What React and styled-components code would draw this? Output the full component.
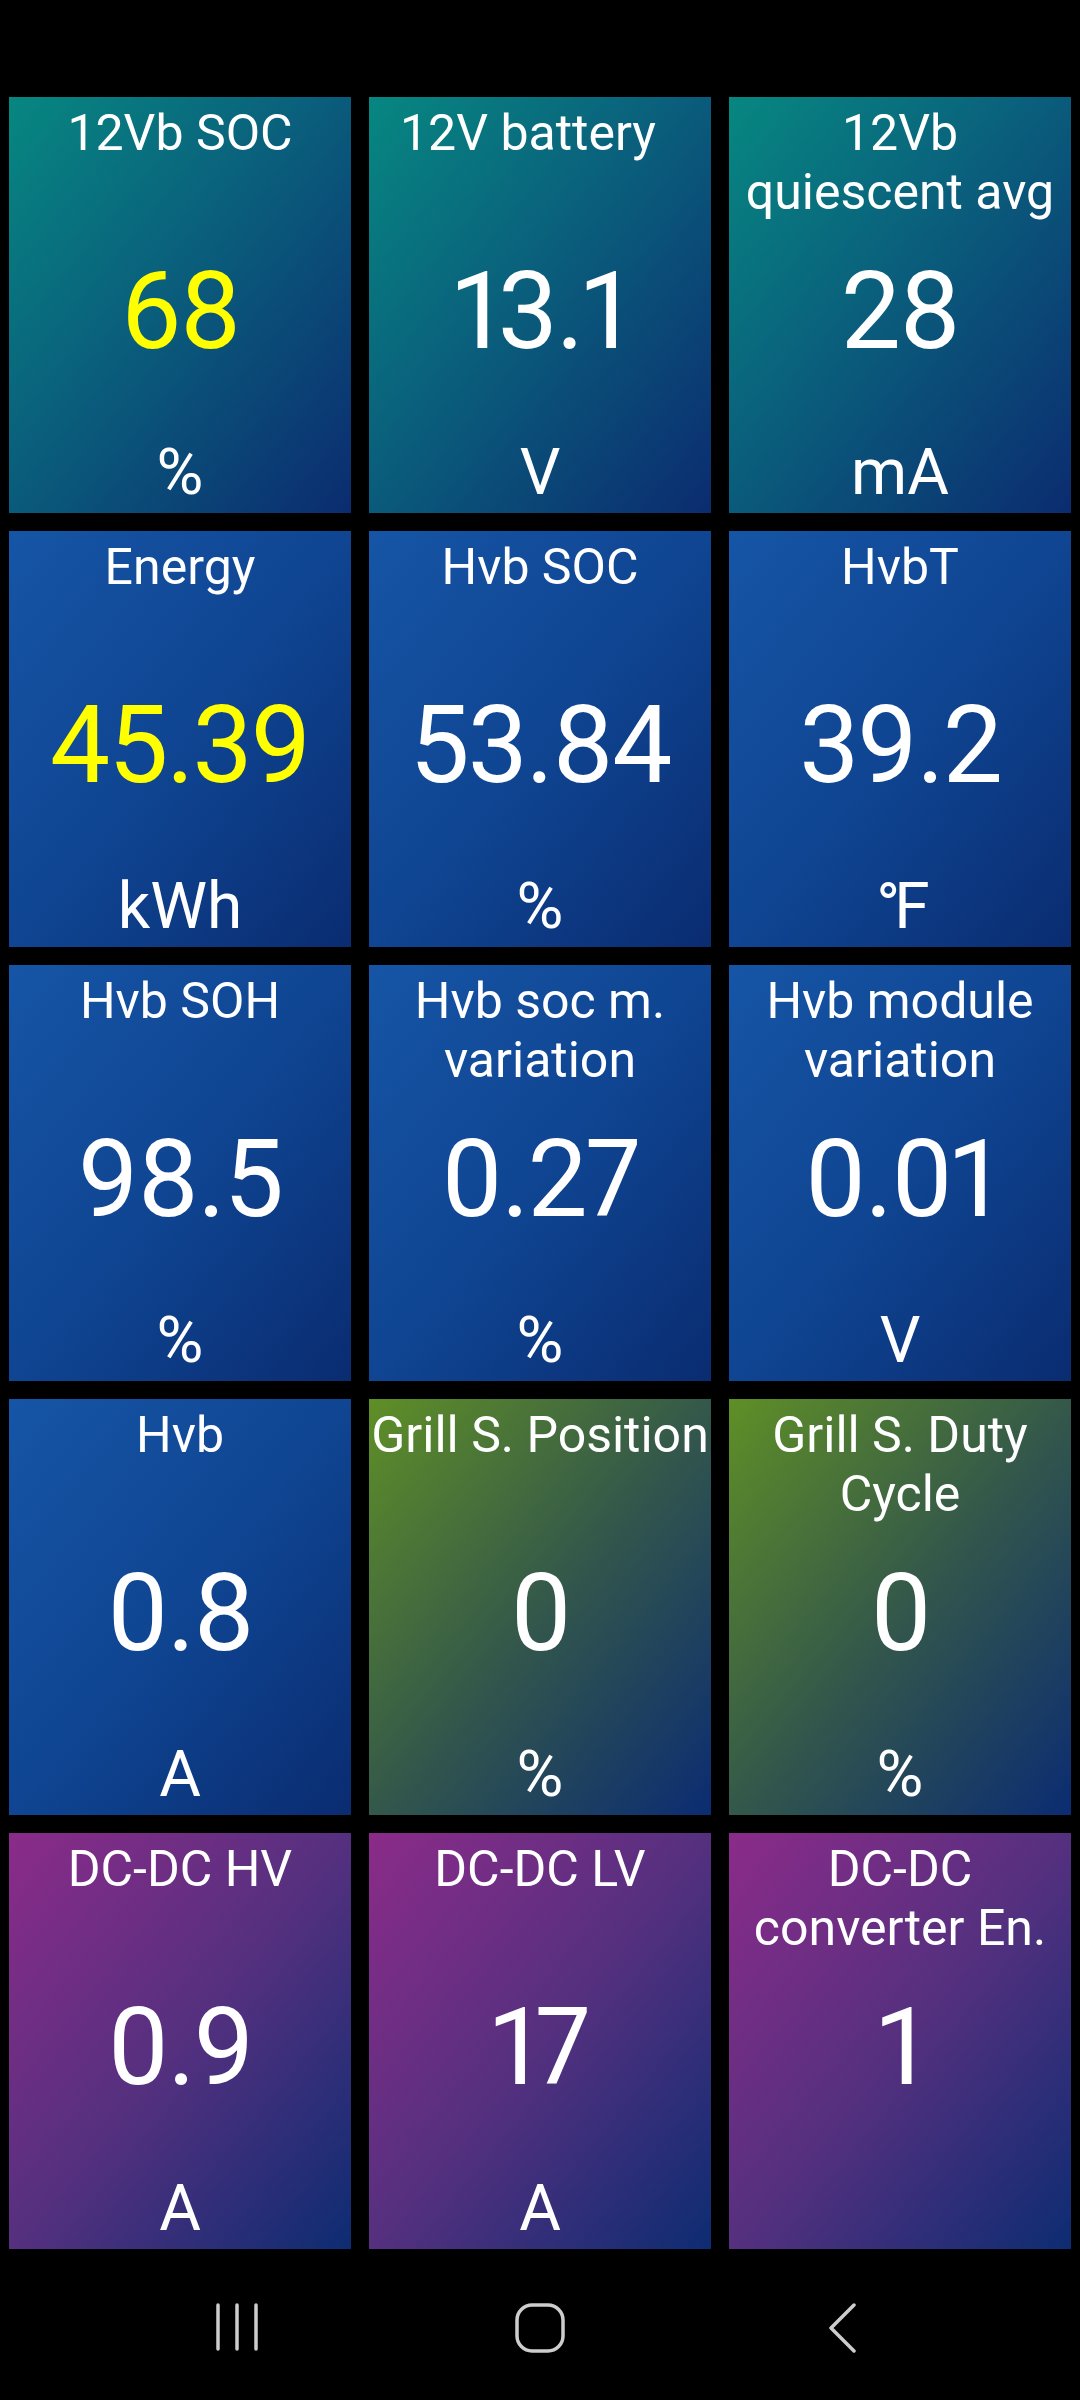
import React from 'react';
import styled, { createGlobalStyle } from 'styled-components';

const GlobalStyle = createGlobalStyle`
	html, body {
		margin: 0;
		padding: 0;
		background: #000;
	}
	body {
		font-family: Roboto, "Noto Sans", "Liberation Sans", sans-serif;
		-webkit-font-smoothing: antialiased;
	}
`;

// gradients run from the tile's top-left tint down to the shared navy corner
const tones = {
	teal: 'linear-gradient(to bottom right, #078781 0%, #0a5f7c 45%, #0b2c70 100%)',
	blue: 'linear-gradient(to bottom right, #1655a6 0%, #0f4592 50%, #0a2c71 100%)',
	green: 'linear-gradient(to bottom right, #5f8f26 0%, #34584a 50%, #0b2c72 100%)',
	purple: 'linear-gradient(to bottom right, #8b2b89 0%, #55307f 50%, #0d2c72 100%)',
};

const Screen = styled.div`
	width: 1080px;
	height: 2400px;
	display: flex;
	flex-direction: column;
	background: #000;
	overflow: hidden;
`;

const StatusArea = styled.div`
	height: 97px;
	flex: none;
`;

const Grid = styled.div`
	display: grid;
	grid-template-columns: repeat(3, 342px);
	grid-auto-rows: 416px;
	gap: 18px;
	padding: 0 9px;
`;

const Tile = styled.div`
	display: grid;
	grid-template-areas: 'stack';
	overflow: hidden;
	background: ${({ tone }) => tones[tone]};
	color: #fff;
	text-align: center;
`;

const Title = styled.div`
	grid-area: stack;
	align-self: start;
	padding-top: 7px;
	padding-right: ${({ nudge }) => nudge || 0}px;
	font-size: 50px;
	line-height: 59px;
`;

const Value = styled.div`
	grid-area: stack;
	align-self: center;
	margin-top: 12px;
	font-size: 107px;
	line-height: 125px;
	letter-spacing: -2px;
	font-variant-numeric: proportional-nums;
	color: ${({ highlight }) => (highlight ? '#ffff00' : '#fff')};
`;

const Unit = styled.div`
	grid-area: stack;
	align-self: end;
	padding-bottom: 3px;
	font-size: 64px;
	line-height: 75px;
	letter-spacing: ${({ tight }) => (tight ? '-6px' : '0')};
`;

const NavBar = styled.nav`
	flex: 1;
	display: grid;
	grid-template-columns: repeat(3, 303px);
	justify-content: center;
	align-items: start;
	padding-top: 54px;
`;

const NavButton = styled.div`
	display: flex;
	justify-content: center;
	color: #cdcdcd;

	svg {
		display: block;
	}
`;

const gauges = [
	{ title: '12Vb SOC', value: '68', unit: '%', tone: 'teal', highlight: true },
	{ title: '12V battery', value: '13.1', unit: 'V', tone: 'teal', nudge: 24 },
	{ title: '12Vb quiescent avg', value: '28', unit: 'mA', tone: 'teal' },
	{ title: 'Energy', value: '45.39', unit: 'kWh', tone: 'blue', highlight: true },
	{ title: 'Hvb SOC', value: '53.84', unit: '%', tone: 'blue' },
	{ title: 'HvbT', value: '39.2', unit: '°F', tone: 'blue' },
	{ title: 'Hvb SOH', value: '98.5', unit: '%', tone: 'blue' },
	{ title: 'Hvb soc m. variation', value: '0.27', unit: '%', tone: 'blue' },
	{ title: 'Hvb module variation', value: '0.01', unit: 'V', tone: 'blue' },
	{ title: 'Hvb', value: '0.8', unit: 'A', tone: 'blue' },
	{ title: 'Grill S. Position', value: '0', unit: '%', tone: 'green' },
	{ title: 'Grill S. Duty Cycle', value: '0', unit: '%', tone: 'green' },
	{ title: 'DC-DC HV', value: '0.9', unit: 'A', tone: 'purple' },
	{ title: 'DC-DC LV', value: '17', unit: 'A', tone: 'purple' },
	{ title: 'DC-DC converter En.', value: '1', unit: '', tone: 'purple' },
];

const RecentsIcon = () => (
	<svg width="46" height="48" viewBox="0 0 46 48" fill="none" stroke="currentColor" strokeWidth="3.5" strokeLinecap="round">
		<line x1="4" y1="2" x2="4" y2="46" />
		<line x1="23" y1="2" x2="23" y2="46" />
		<line x1="42" y1="2" x2="42" y2="46" />
	</svg>
);

const HomeIcon = () => (
	<svg width="50" height="50" viewBox="0 0 50 50" fill="none" stroke="currentColor" strokeWidth="3.5">
		<rect x="2" y="2" width="46" height="46" rx="15" />
	</svg>
);

const BackIcon = () => (
	<svg width="30" height="50" viewBox="0 0 30 50" fill="none" stroke="currentColor" strokeWidth="3.5" strokeLinecap="round" strokeLinejoin="round">
		<polyline points="26,2 3,25 26,48" />
	</svg>
);

const App = () => (
	<>
		<GlobalStyle />
		<Screen>
			<StatusArea />
			<Grid>
				{gauges.map((g) => (
					<Tile key={g.title} tone={g.tone}>
						<Title nudge={g.nudge}>{g.title}</Title>
						<Value highlight={g.highlight}>{g.value}</Value>
						{g.unit && <Unit tight={g.unit === '°F'}>{g.unit}</Unit>}
					</Tile>
				))}
			</Grid>
			<NavBar>
				<NavButton>
					<RecentsIcon />
				</NavButton>
				<NavButton>
					<HomeIcon />
				</NavButton>
				<NavButton>
					<BackIcon />
				</NavButton>
			</NavBar>
		</Screen>
	</>
);

export default App;
